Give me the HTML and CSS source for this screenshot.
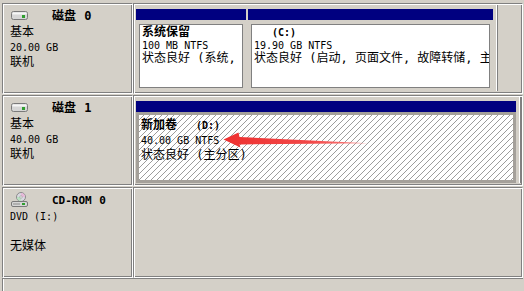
FILE: index.html
```html
<!DOCTYPE html>
<html lang="zh-CN">
<head>
    <meta charset="UTF-8">
    <title>磁盘管理</title>
    <link rel="stylesheet" href="styles.css">
</head>
<body>

<div class="view">

    <!-- disk 0 -->
    <div class="row">
        <div class="label">
            <div class="title">
                <svg class="icon" width="18" height="10" viewBox="0 0 18 10">
                    <rect x="0.5" y="0.5" width="16" height="8" rx="2" fill="#d6d6d6" stroke="#7a7a7a"/>
                    <rect x="1.5" y="1.5" width="14" height="2" fill="#f6f6f6"/>
                    <rect x="11" y="4" width="3" height="3" fill="#2f9e2f"/>
                </svg>
                <b>磁盘 0</b>
            </div>
            <div>基本</div>
            <div class="en">20.00 GB</div>
            <div>联机</div>
        </div>
        <div class="region">
            <div class="disk" style="width: 362px;">
                <div class="part" style="width: 110px;">
                    <div class="bar"></div>
                    <div class="body">
                        <div class="box">
                            <b>系统保留</b>
                            <div class="en">100 MB NTFS</div>
                            <div>状态良好 (系统, 活动, 主分区)</div>
                        </div>
                    </div>
                </div>
                <div class="part" style="width: 245px;">
                    <div class="bar"></div>
                    <div class="body">
                        <div class="box">
                            <b class="en letter">(C:)</b>
                            <div class="en">19.90 GB NTFS</div>
                            <div>状态良好 (启动, 页面文件, 故障转储, 主分区)</div>
                        </div>
                    </div>
                </div>
            </div>
        </div>
    </div>

    <!-- disk 1 -->
    <div class="row">
        <div class="label">
            <div class="title">
                <svg class="icon" width="18" height="10" viewBox="0 0 18 10">
                    <rect x="0.5" y="0.5" width="16" height="8" rx="2" fill="#d6d6d6" stroke="#7a7a7a"/>
                    <rect x="1.5" y="1.5" width="14" height="2" fill="#f6f6f6"/>
                    <rect x="11" y="4" width="3" height="3" fill="#2f9e2f"/>
                </svg>
                <b>磁盘 1</b>
            </div>
            <div>基本</div>
            <div class="en">40.00 GB</div>
            <div>联机</div>
        </div>
        <div class="region">
            <div class="disk" style="width: 385px;">
                <div class="part" style="width: 380px;">
                    <div class="bar"></div>
                    <div class="body selected">
                        <div class="box">
                            <b>新加卷<span class="en letter">(D:)</span></b>
                            <div class="en">40.00 GB NTFS</div>
                            <div>状态良好 (主分区)</div>
                        </div>
                    </div>
                </div>
            </div>
        </div>
    </div>

    <!-- cd-rom -->
    <div class="row">
        <div class="label">
            <div class="title">
                <svg class="icon cd" width="18" height="16" viewBox="0 0 18 16">
                    <circle cx="10" cy="5" r="4.5" fill="#d8d8e0" stroke="#8a8a8a"/>
                    <path d="M10 1 A4 4 0 0 1 14 5 L10 5 Z" fill="#e6b8d8"/>
                    <path d="M6 5 A4 4 0 0 0 10 9 L10 5 Z" fill="#b8e0c0"/>
                    <circle cx="10" cy="5" r="1.2" fill="#fff" stroke="#8a8a8a" stroke-width="0.6"/>
                    <rect x="0.5" y="9.5" width="16" height="5" rx="1.5" fill="#d6d6d6" stroke="#7a7a7a"/>
                    <rect x="2" y="11.5" width="7" height="1" fill="#8a8a8a"/>
                    <rect x="11" y="11" width="3" height="2" fill="#2f9e2f"/>
                </svg>
                <b class="en">CD-ROM 0</b>
            </div>
            <div class="en">DVD (I:)</div>
            <div>&nbsp;</div>
            <div>无媒体</div>
        </div>
        <div class="region"></div>
    </div>

    <div class="rest"></div>

    <svg class="arrow" width="152" height="24" viewBox="0 0 152 24">
        <defs>
            <linearGradient id="fade" x1="0" y1="0" x2="1" y2="0">
                <stop offset="0" stop-color="#ee3030"/>
                <stop offset="0.6" stop-color="#f24848"/>
                <stop offset="1" stop-color="#f88"/>
            </linearGradient>
        </defs>
        <polygon points="3.5,11.5 18.5,4.5 19.5,9 148,15.3 19.5,16.5 20.5,19.5" fill="url(#fade)"/>
    </svg>

</div>

</body>
</html>
```

FILE: styles.css
```css
* {
    box-sizing: border-box;
}
body {
    margin: 0;
    background: #d4d0c8;
    /* mono latin + cjk, closest thing to the old SimSun look */
    font-family: "DejaVu Sans Mono", "Noto Sans CJK SC", monospace;
    font-size: 12px;
    color: #000;
}
.en {
    font-size: 10px;
}
.view {
    position: relative;
    height: 291px;
    overflow: hidden;
    padding: 3px 1px 0 2px;
    display: flex;
    flex-direction: column;
    gap: 1px;
}
.row {
    display: flex;
    height: 91px;
    flex-shrink: 0;
}

/* etched edge, like the old win32 listview cells */
.label,
.region {
    border: 1px solid;
    border-color: #808080 #fff #fff #808080;
    box-shadow: inset 1px 1px #fff, inset -1px -1px #808080;
}
.label {
    width: 131px;
    padding: 5px 0 0 7px;
    line-height: 15px;
    white-space: nowrap;
}
.label > div + div {
    margin-top: 0;
}
.title {
    display: flex;
    align-items: center;
    height: 15px;
    margin-bottom: 1px;
}
.title b {
    word-spacing: 1px;
}
.title .en {
    font-size: 11px;
}
.icon {
    margin: -1px 23px 0 1px;
    flex-shrink: 0;
}
.icon.cd {
    margin-top: -2px;
}
.region {
    flex: 1;
    padding: 1px 0 0 1px;
}
.rest {
    flex: 1;
    margin-top: -1px;
    border-top: 1px solid #808080;
    border-left: 1px solid #808080;
    box-shadow: inset 1px 0 #fff;
}

/* disk strip */
.disk {
    display: flex;
    gap: 2px;
    height: 86px;
    padding: 4px 3px 0 1px;
    border-right: 1px solid #fff;
    box-shadow: 1px 0 #808080;
}
.part {
    display: flex;
    flex-direction: column;
}
.bar {
    height: 11px;
    background: #000080;
    flex-shrink: 0;
}
.body {
    flex: 1;
    padding: 4px 3px 3px;
    min-height: 0;
}
.box {
    height: 100%;
    background: #fff;
    border: 1px solid #808080;
    padding: 1px 2px 0;
    line-height: 13px;
    overflow: hidden;
    white-space: nowrap;
}
.box b {
    display: block;
}
.letter {
    padding-left: 18px;
}
.body.selected {
    background: #a4a09a;
    padding: 3px;
}
.body.selected .box {
    border: none;
    padding: 3px 2px 0;
    line-height: 14.5px;
    background: repeating-linear-gradient(135deg, #fff 0 3.24px, #9c9c9c 3.24px 4.24px);
}
.body.selected .letter {
    display: inline-block;
    padding-left: 19px;
}

.arrow {
    position: absolute;
    left: 220px;
    top: 128px;
    pointer-events: none;
}
```
